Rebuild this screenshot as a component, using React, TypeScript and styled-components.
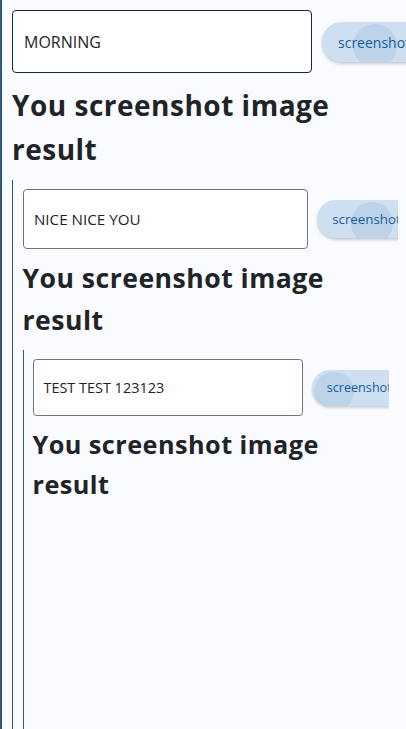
import React from "react";
import styled, { createGlobalStyle } from "styled-components";

const Global = createGlobalStyle`
  html, body { margin: 0; padding: 0; background: #fafbfe; overflow: hidden; }
  body { font-family: "Open Sans", "Noto Sans", sans-serif; }
`;

const Level = styled.section<{ $nested: boolean }>`
  width: 406px;
  box-sizing: border-box;
  border-left: 2px solid #2a5a82;
  padding: 10px 0 0 10px;
  overflow: hidden;
  background: #fafbfe;
  ${(p) =>
    p.$nested
      ? "zoom: 0.95; margin-top: 9px; min-height: 729px;"
      : "height: 100vh;"}
`;

const Row = styled.div`
  display: flex;
  align-items: center;
  gap: 10px;
`;

const Field = styled.div<{ $focused: boolean }>`
  flex: 0 0 300px;
  height: 63px;
  box-sizing: border-box;
  border: 1px solid ${(p) => (p.$focused ? "#18283a" : "#6b7480")};
  border-radius: 4px;
  background: #ffffff;
  display: flex;
  align-items: center;
  padding: 0 11px;
  font-size: 16px;
  color: #222428;
`;

const ShotButton = styled.button<{ $ripple: number }>`
  position: relative;
  flex: 0 0 auto;
  height: 40px;
  padding: 0 24px 0 16px;
  border: none;
  border-radius: 20px;
  background: #cddff0;
  color: #175d9c;
  font-family: "Open Sans", "Noto Sans", sans-serif;
  font-size: 14px;
  overflow: hidden;
  box-shadow: 0 2px 3px rgba(40, 60, 90, 0.25);
  margin-top: 1px;
  &::before {
    content: "";
    position: absolute;
    left: ${(p) => p.$ripple - 22}px;
    top: 2px;
    width: 44px;
    height: 44px;
    border-radius: 50%;
    background: #bcd3e9;
  }
  span { position: relative; }
`;

const Heading = styled.h2`
  margin: 10px 0 0;
  font-size: 28px;
  line-height: 44px;
  font-weight: 700;
  letter-spacing: 0.5px;
  color: #222326;
  width: 350px;
`;

const items = [
  { text: "MORNING", ripple: 53 },
  { text: "NICE NICE YOU", ripple: 58 },
  { text: "TEST TEST 123123", ripple: 24 },
];

function Shot({ index }: { index: number }) {
  const item = items[index];
  return (
    <Level $nested={index > 0}>
      <Row>
        <Field $focused={index === 0}>{item.text}</Field>
        <ShotButton $ripple={item.ripple}>
          <span>screenshot</span>
        </ShotButton>
      </Row>
      <Heading>You screenshot image result</Heading>
      {index + 1 < items.length && <Shot index={index + 1} />}
    </Level>
  );
}

export default function App() {
  return (
    <>
      <Global />
      <Shot index={0} />
    </>
  );
}
